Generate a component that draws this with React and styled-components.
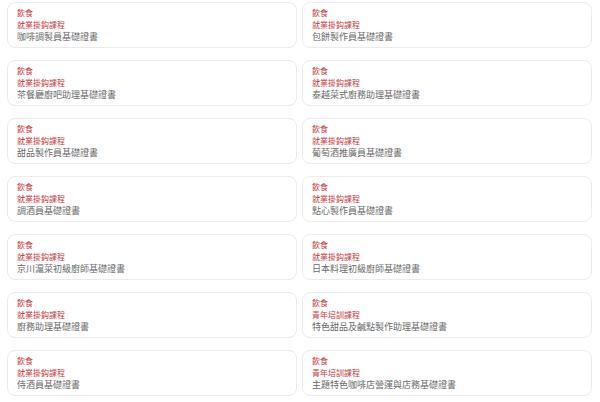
import React from 'react';
import styled, { createGlobalStyle } from 'styled-components';

const courses = [
    { category: '飲食', type: '就業掛鈎課程', name: '咖啡調製員基礎證書' },
    { category: '飲食', type: '就業掛鈎課程', name: '包餅製作員基礎證書' },
    { category: '飲食', type: '就業掛鈎課程', name: '茶餐廳廚吧助理基礎證書' },
    { category: '飲食', type: '就業掛鈎課程', name: '泰越菜式廚務助理基礎證書' },
    { category: '飲食', type: '就業掛鈎課程', name: '甜品製作員基礎證書' },
    { category: '飲食', type: '就業掛鈎課程', name: '葡萄酒推廣員基礎證書' },
    { category: '飲食', type: '就業掛鈎課程', name: '調酒員基礎證書' },
    { category: '飲食', type: '就業掛鈎課程', name: '點心製作員基礎證書' },
    { category: '飲食', type: '就業掛鈎課程', name: '京川滬菜初級廚師基礎證書' },
    { category: '飲食', type: '就業掛鈎課程', name: '日本料理初級廚師基礎證書' },
    { category: '飲食', type: '就業掛鈎課程', name: '廚務助理基礎證書' },
    { category: '飲食', type: '青年培訓課程', name: '特色甜品及鹹點製作助理基礎證書' },
    { category: '飲食', type: '就業掛鈎課程', name: '侍酒員基礎證書' },
    { category: '飲食', type: '青年培訓課程', name: '主題特色咖啡店營運與店務基礎證書' },
];

const GlobalStyle = createGlobalStyle`
    body {
        margin: 0;
        background: #ffffff;
        font-family: "Noto Sans CJK TC", "Noto Sans", sans-serif;
    }
`;

const CourseGrid = styled.div`
    display: grid;
    grid-template-columns: 290px 290px;
    column-gap: 5px;
    row-gap: 12px;
    padding: 2px 8px 0 7px;
`;

const Card = styled.div`
    box-sizing: border-box;
    height: 46px;
    padding: 4px 9px;
    border: 1px solid #ececec;
    border-radius: 8px;
    display: flex;
    flex-direction: column;
    justify-content: center;
`;

const Tag = styled.div`
    font-size: 8px;
    line-height: 11.7px;
    color: #c83a42;
`;

const Title = styled.div`
    font-size: 9px;
    line-height: 12px;
    color: #6a6a6a;
`;

const App = () => {
    return (
        <>
            <GlobalStyle />
            <CourseGrid>
                {courses.map((c, i) => (
                    <Card key={i}>
                        <Tag>{c.category}</Tag>
                        <Tag>{c.type}</Tag>
                        <Title>{c.name}</Title>
                    </Card>
                ))}
            </CourseGrid>
        </>
    );
};

export default App;
